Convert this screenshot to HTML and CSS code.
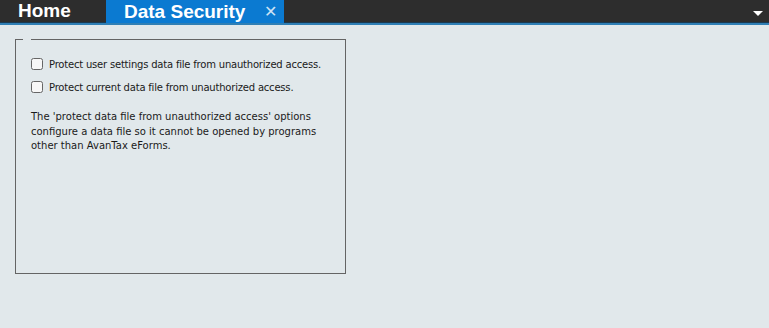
FILE: index.html
```html
<!DOCTYPE html>
<html>
<head>
<meta charset="utf-8">
<link rel="stylesheet" href="styles.css">
</head>
<body>
<div class="tabbar">
  <div class="tab home">Home</div>
  <div class="tab active"><span class="label">Data Security</span><span class="close">✕</span></div>
  <div class="spacer"></div>
  <div class="dropdown"><svg width="10" height="6" viewBox="0 0 10 6"><path d="M0 0H10L5 5Z" fill="#fff"/></svg></div>
</div>
<div class="content">
  <div class="group">
    <label class="row"><span class="box"></span><span class="text">Protect user settings data file from unauthorized access.</span></label>
    <label class="row"><span class="box"></span><span class="text">Protect current data file from unauthorized access.</span></label>
    <p class="note">The 'protect data file from unauthorized access' options configure a data file so it cannot be opened by programs other than AvanTax eForms.</p>
  </div>
</div>
</body>
</html>
```
FILE: styles.css
```css
html, body {
  margin: 0;
  padding: 0;
  background: #e1e8eb;
  width: 769px;
  height: 328px;
  overflow: hidden;
}
.tabbar {
  display: flex;
  height: 22px;
  background: #2d2d2d;
  border-bottom: 1px solid #1a3a52;
  box-shadow: 0 2px 0 #2f7fb5;
  font-family: "Liberation Sans", Arial, sans-serif;
  font-weight: bold;
  font-size: 19px;
  color: #fff;
}
.tab {
  display: flex;
  align-items: center;
  height: 22px;
  line-height: 22px;
}
.home {
  width: 106px;
  padding-left: 18px;
  box-sizing: border-box;
}
.active {
  width: 178px;
  padding-left: 18px;
  box-sizing: border-box;
  background: #0b7ad1;
  height: 23px;
}
.close {
  margin-left: 19px;
  font-size: 16px;
  font-weight: normal;
  color: #cfe3f5;
}
.spacer { flex: 1; }
.dropdown {
  display: flex;
  align-items: flex-start;
  padding-top: 11px;
  padding-right: 6px;
}
.content {
  padding: 16px 0 0 15px;
}
.group {
  position: relative;
  width: 331px;
  height: 235px;
  box-sizing: border-box;
  border: 1px solid #646464;
  padding: 18px 15px 0 15px;
  font-family: "DejaVu Sans", Tahoma, sans-serif;
  font-size: 10px;
  color: #1a1a1a;
}
.group::before {
  content: "";
  position: absolute;
  top: -1px;
  left: 7px;
  width: 8px;
  height: 1px;
  background: #e1e8eb;
}
.row {
  display: flex;
  align-items: center;
  gap: 6px;
  height: 12px;
  margin-bottom: 11px;
}
.text {
  white-space: nowrap;
  letter-spacing: -0.2px;
}
.box {
  width: 10px;
  height: 10px;
  border: 1px solid #666;
  border-radius: 2.5px;
  background: #f7f7f7;
  flex: none;
}
.note {
  margin: 17px 0 0 0;
  width: 290px;
  line-height: 14.5px;
}
```
